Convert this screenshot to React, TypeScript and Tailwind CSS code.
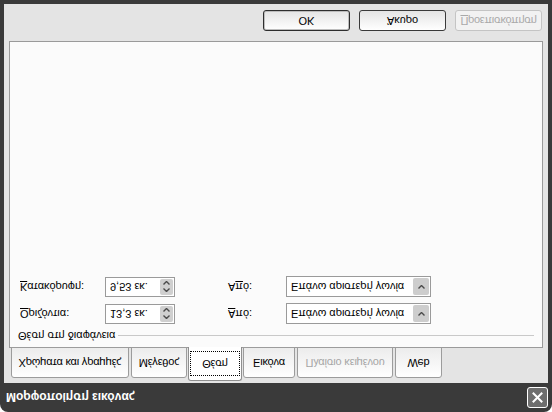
import React from 'react';

const tabs = [
  { label: 'Χρώματα και γραμμές', w: 'w-[118px]' },
  { label: 'Μέγεθος', w: 'w-[56px]' },
  { label: 'Θέση', w: 'w-[54px]', active: true },
  { label: 'Εικόνα', w: 'w-[52px]' },
  { label: 'Πλαίσιο κειμένου', w: 'w-[96px]', disabled: true },
  { label: 'Web', w: 'w-[47px]' },
];

function Chevron({ up }: { up?: boolean }) {
  return (
    <svg width="7" height="4" viewBox="0 0 7 4" className="block">
      <polyline
        points={up ? '0.5,3.5 3.5,0.5 6.5,3.5' : '0.5,0.5 3.5,3.5 6.5,0.5'}
        fill="none"
        stroke="#4a4a4a"
        strokeWidth="1.4"
      />
    </svg>
  );
}

function SpinInput({ value }: { value: string }) {
  return (
    <div className="flex h-[20px] w-[70px] items-stretch border border-[#9a9a9a] bg-white">
      <div className="flex flex-1 items-center pl-[4px]">{value}</div>
      <div className="m-[1px] flex w-[13px] flex-col items-center justify-center gap-[3px] rounded-[2px] bg-[#cfcfcf]">
        <Chevron up />
        <Chevron />
      </div>
    </div>
  );
}

function Select({ value }: { value: string }) {
  return (
    <div className="flex h-[21px] w-[145px] items-stretch border border-[#9a9a9a] bg-white">
      <div className="flex flex-1 items-center pl-[4px]">{value}</div>
      <div className="m-[1px] flex w-[16px] items-center justify-center rounded-[2px] bg-[#cdcdcd]">
        <Chevron />
      </div>
    </div>
  );
}

function Row({ label, value, fromLabel }: { label: React.ReactNode; value: string; fromLabel: React.ReactNode }) {
  return (
    <div className="flex items-center">
      <div className="w-[87px] pl-[2px]">{label}</div>
      <SpinInput value={value} />
      <div className="ml-[53px] w-[58px]">{fromLabel}</div>
      <Select value="Επάνω αριστερή γωνία" />
    </div>
  );
}

function Button({ children, disabled, primary }: { children: React.ReactNode; disabled?: boolean; primary?: boolean }) {
  return (
    <button
      className={
        disabled
          ? 'flex h-[21px] w-[87px] items-center justify-center rounded-[3px] border border-[#c4c4c4] bg-[#f2f2f2] tracking-[-0.3px] text-[#a9a9a9]'
          : primary
          ? 'flex h-[21px] w-[87px] items-center justify-center rounded-[3px] border border-[#2e2e2e] bg-gradient-to-b from-white to-[#e4e4e4] shadow-[inset_0_0_0_1px_#bdbdbd]'
          : 'flex h-[21px] w-[87px] items-center justify-center rounded-[3px] border border-[#3a3a3a] bg-gradient-to-b from-white to-[#e4e4e4]'
      }
    >
      {children}
    </button>
  );
}

export default function App() {
  return (
    <div className="h-[412px] w-[552px] -scale-y-100 bg-white font-['Liberation_Sans',Arial,sans-serif] text-[11px] text-black">
      <div className="flex h-full flex-col rounded-t-[8px] bg-[#3a3a3a] px-[4px] pb-[4px]">
        {/* Title bar */}
        <div className="flex h-[29px] shrink-0 items-center justify-between pl-[2px]">
          <span className="text-[12px] font-bold text-white">Μορφοποίηση εικόνας</span>
          <div className="flex h-[21px] w-[21px] items-center justify-center rounded-[3px] border border-white bg-[#6e6e6e]">
            <svg width="11" height="11" viewBox="0 0 11 11">
              <path d="M1.5 1.5 L9.5 9.5 M9.5 1.5 L1.5 9.5" stroke="white" strokeWidth="2" strokeLinecap="square" />
            </svg>
          </div>
        </div>

        {/* Body */}
        <div className="flex flex-1 flex-col bg-[#e4e4e4] px-[5px] pt-[2px]">
          {/* Tabs */}
          <div className="relative z-10 -mb-px flex h-[34px] items-end gap-[2px] pl-[2px] tracking-[-0.2px]">
            {tabs.map((t) =>
              t.active ? (
                <div
                  key={t.label}
                  className={`${t.w} -mx-[1px] flex h-[34px] items-center justify-center rounded-t-[3px] border border-b-0 border-[#8f8f8f] bg-white`}
                >
                  <span className="border border-dotted border-black px-[11px] py-[3px]">{t.label}</span>
                </div>
              ) : (
                <div
                  key={t.label}
                  className={`${t.w} flex h-[31px] items-center justify-center rounded-t-[3px] border border-[#9c9c9c] bg-gradient-to-b from-white to-[#ececec] ${
                    t.disabled ? 'text-[#a6a6a6]' : ''
                  }`}
                >
                  {t.label}
                </div>
              )
            )}
          </div>

          {/* Panel */}
          <div className="flex h-[307px] flex-col border border-[#9a9a9a] bg-[#fbfbfb] pl-[8px] pr-[8px] pt-[3px]">
            <div className="flex items-center gap-[3px]">
              <span>Θέση στη διαφάνεια</span>
              <div className="h-px flex-1 bg-[#c9c9c9]" />
            </div>
            <div className="mt-[3px] flex flex-col gap-[6px]">
              <Row
                label={<><span className="underline">Ο</span>ριζόντια:</>}
                value="13,3 εκ."
                fromLabel={<><span className="underline">Α</span>πό:</>}
              />
              <Row
                label={<><span className="underline">Κ</span>ατακόρυφη:</>}
                value="9,53 εκ."
                fromLabel={<>Α<span className="underline">π</span>ό:</>}
              />
            </div>
          </div>

          {/* Buttons */}
          <div className="mt-[10px] flex justify-end gap-[9px] pr-[1px]">
            <Button primary>OK</Button>
            <Button>Άκυρο</Button>
            <Button disabled>
              <span className="underline">Π</span>ροεπισκόπηση
            </Button>
          </div>
        </div>
      </div>
    </div>
  );
}
